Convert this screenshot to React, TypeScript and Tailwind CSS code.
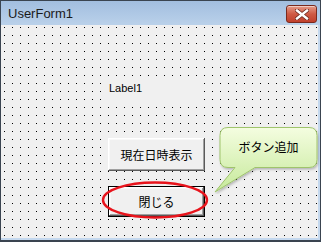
import React from "react";

const sans = "font-['Liberation_Sans','Noto_Sans_CJK_JP',sans-serif]";
const jp = "font-['Noto_Sans_CJK_JP',sans-serif]";

function CloseButton() {
  return (
    <div className="w-[31px] h-[18px] rounded-[3px] border border-[#7a2a1e] bg-gradient-to-b from-[#e49a88] via-[#cf5a44] to-[#c0402c] flex items-center justify-center shadow-[inset_0_1px_0_rgba(255,255,255,0.5)]">
      <svg width="14" height="11" viewBox="0 0 14 11">
        <path d="M2 1.5 L12 9.5 M12 1.5 L2 9.5" stroke="#6b2a20" strokeWidth="4" strokeLinecap="square" />
        <path d="M2 1.5 L12 9.5 M12 1.5 L2 9.5" stroke="#fff" strokeWidth="2.4" strokeLinecap="square" />
      </svg>
    </div>
  );
}

function Button({ label, isDefault }: { label: string; isDefault?: boolean }) {
  return (
    <div className={isDefault ? "w-full h-full border border-black" : "w-full h-full"}>
      <div
        className={`w-full h-full bg-[#f0f0f0] flex items-center justify-center text-[12px] text-black ${jp} shadow-[inset_-1px_-1px_#5a5a5a,inset_1px_1px_#ffffff,inset_-2px_-2px_#a0a0a0,inset_2px_2px_#f8f8f8]`}
      >
        {label}
      </div>
    </div>
  );
}

function Callout() {
  return (
    <div className="absolute left-[211px] top-[123px] w-[108px] h-[70px]">
      <svg width="108" height="70" viewBox="0 0 108 70" className="absolute inset-0">
        <defs>
          <linearGradient id="cg" x1="0" y1="0" x2="0" y2="1">
            <stop offset="0" stopColor="#f4fde0" />
            <stop offset="1" stopColor="#c6e99a" />
          </linearGradient>
          <filter id="sh" x="-10%" y="-10%" width="130%" height="130%">
            <feDropShadow dx="1" dy="1.5" stdDeviation="1" floodColor="#000" floodOpacity="0.25" />
          </filter>
        </defs>
        <path
          d="M16 3.5 H97 Q105 3.5 105 11.5 V35.5 Q105 43.5 97 43.5 H43 L3 68 L23 43.5 H16 Q8 43.5 8 35.5 V11.5 Q8 3.5 16 3.5 Z"
          fill="url(#cg)"
          stroke="#9fc46c"
          strokeWidth="1"
          filter="url(#sh)"
        />
      </svg>
      <div className={`absolute left-[8px] top-[3px] w-[97px] h-[40px] flex items-center justify-center text-[12px] text-black ${jp}`}>
        ボタン追加
      </div>
    </div>
  );
}

export default function App() {
  return (
    <div className="w-[321px] h-[242px] bg-[#c4d8ee] border-l border-t border-r border-b-2 border-[#3a4450] flex flex-col overflow-hidden relative">
      <div className="h-[24px] shrink-0 bg-gradient-to-b from-[#a2bedf] to-[#bad1ea] flex items-center justify-between pl-[7px] pr-[3px]">
        <span className={`text-[13px] text-[#1a1a1a] ${sans} pt-[2px]`}>UserForm1</span>
        <div className="pt-[2px]">
          <CloseButton />
        </div>
      </div>
      <div className="flex-1 mr-[2px] mb-[2px] relative bg-[#f0f0f0] bg-[conic-gradient(at_1px_1px,transparent_75%,#000_0)] bg-[length:8px_8px] bg-[position:3px_2px]">
        <div className="flex flex-col items-start pl-[102px] pt-[55px]">
          <div className={`w-[98px] h-[23px] bg-[#f0f0f0] pl-[6px] text-[11px] leading-[16px] text-black ${sans}`}>
            Label1
          </div>
          <div className="ml-[5px] mt-[35px] w-[97px] h-[33px]">
            <Button label="現在日時表示" />
          </div>
          <div className="ml-[5px] mt-[15px] w-[97px] h-[31px]">
            <Button label="閉じる" isDefault />
          </div>
        </div>
        {/* red ellipse */}
        <svg className="absolute left-[90px] top-[150px]" width="130" height="50" viewBox="0 0 130 50">
          <ellipse cx="64" cy="25" rx="52" ry="17.5" fill="none" stroke="#e8141c" strokeWidth="2.4" />
        </svg>
      </div>
      <Callout />
    </div>
  );
}
